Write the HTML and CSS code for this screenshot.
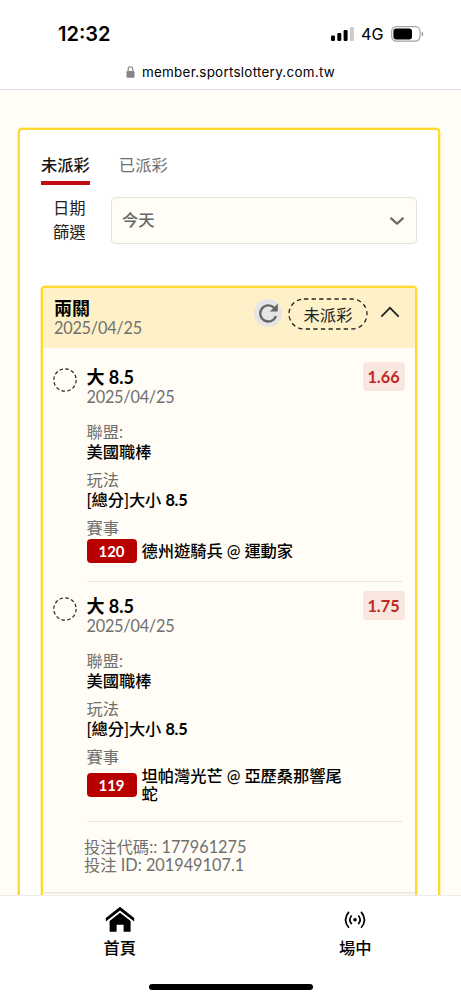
FILE: index.html
```html
<!DOCTYPE html>
<html lang="zh-Hant">
<head>
<meta charset="utf-8">
<meta name="viewport" content="width=device-width, initial-scale=1">
<title>member.sportslottery.com.tw</title>
<link rel="stylesheet" href="styles.css">
</head>
<body>
<div class="phone">
  <header class="browser">
    <div class="status">
      <span class="clock">12:32</span>
      <div class="indicators">
        <svg class="signal" width="24" height="16" viewBox="0 0 24 16">
          <rect x="0" y="9.5" width="4" height="5.5" rx="1.2"/>
          <rect x="6.3" y="7" width="4" height="8" rx="1.2"/>
          <rect x="12.6" y="4" width="4" height="11" rx="1.2"/>
          <rect x="18.9" y="1" width="4" height="14" rx="1.2" fill="#ccc"/>
        </svg>
        <span class="network">4G</span>
        <svg class="battery" width="33" height="16" viewBox="0 0 33 16">
          <rect x=".7" y=".7" width="28.3" height="14.4" rx="4.6" fill="none" stroke="#a3a3a3" stroke-width="1.2"/>
          <rect x="2.4" y="2.5" width="18.6" height="10.9" rx="3"/>
          <path d="M30.7 5.5v5q1.7-.8 1.7-2.5t-1.7-2.5z" fill="#999"/>
        </svg>
      </div>
    </div>
    <div class="address">
      <svg width="9" height="12" viewBox="0 0 9 12">
        <rect x=".5" y="5" width="8" height="6.7" rx="1.2" fill="#858589"/>
        <path d="M2.1 5.5V3.4a2.4 2.6 0 0 1 4.8 0v2.1" fill="none" stroke="#858589" stroke-width="1.1"/>
      </svg>
      <span>member.sportslottery.com.tw</span>
    </div>
  </header>

  <main class="page">
    <section class="panel">
      <nav class="tabs">
        <span class="tab active">未派彩</span>
        <span class="tab">已派彩</span>
      </nav>
      <div class="filter">
        <span class="filter-label">日期<br>篩選</span>
        <div class="select">
          <span>今天</span>
          <svg width="14" height="9" viewBox="0 0 14 9"><path d="M1.2 1.4 7 6.8l5.8-5.4" fill="none" stroke="#666" stroke-width="2.2" stroke-linecap="round" stroke-linejoin="round"/></svg>
        </div>
      </div>

      <article class="ticket">
        <header class="ticket-head">
          <div class="ticket-title">
            <h2>兩關</h2>
            <span class="date">2025/04/25</span>
          </div>
          <span class="refresh">
            <svg width="20" height="20" viewBox="0 0 20 20"><path d="M18 13.2A8.1 8.1 0 1 1 16 4.6" fill="none" stroke="#666" stroke-width="2.4"/><path d="M19.8.6v8h-8z" fill="#666"/></svg>
          </span>
          <span class="badge">
            <svg class="outline" width="80" height="32" viewBox="0 0 80 32"><rect x="1" y="1" width="78" height="30" rx="15" fill="none" stroke="#222" stroke-width="1.3" stroke-dasharray="4.3 3.3"/></svg>
            <span>未派彩</span>
          </span>
          <svg class="collapse" width="20" height="12" viewBox="0 0 20 12"><path d="M1.3 10.6 10 1.8l8.7 8.8" fill="none" stroke="#222" stroke-width="1.7"/></svg>
        </header>

        <section class="leg">
          <svg class="pending" width="24" height="24" viewBox="0 0 24 24"><circle cx="12" cy="12" r="11.2" fill="none" stroke="#222" stroke-width="1.2" stroke-dasharray="3.5 2.36"/></svg>
          <div class="leg-body">
            <div class="leg-top">
              <div><h3>大 8.5</h3><span class="date">2025/04/25</span></div>
              <span class="odds">1.66</span>
            </div>
            <dl>
              <dt>聯盟:</dt><dd>美國職棒</dd>
              <dt>玩法</dt><dd>[總分]大小 <b>8.5</b></dd>
              <dt>賽事</dt><dd class="match"><span class="number">120</span><span>德州遊騎兵 @ 運動家</span></dd>
            </dl>
          </div>
        </section>

        <section class="leg second">
          <svg class="pending" width="24" height="24" viewBox="0 0 24 24"><circle cx="12" cy="12" r="11.2" fill="none" stroke="#222" stroke-width="1.2" stroke-dasharray="3.5 2.36"/></svg>
          <div class="leg-body">
            <div class="leg-top">
              <div><h3>大 8.5</h3><span class="date">2025/04/25</span></div>
              <span class="odds">1.75</span>
            </div>
            <dl>
              <dt>聯盟:</dt><dd>美國職棒</dd>
              <dt>玩法</dt><dd>[總分]大小 <b>8.5</b></dd>
              <dt>賽事</dt><dd class="match"><span class="number">119</span><span>坦帕灣光芒 @ 亞歷桑那響尾蛇</span></dd>
            </dl>
          </div>
        </section>

        <footer class="codes">
          <div>投注代碼:: 177961275</div>
          <div>投注 ID: 201949107.1</div>
        </footer>
      </article>
    </section>
  </main>

  <footer class="bottom">
    <nav class="links">
      <span class="link">
        <svg width="30" height="27" viewBox="0 0 30 27"><path d="M15 .7 29.2 12v3.6L15 4.5.8 15.6V12z"/><path d="M15 6.7 25.6 15v10.8h-7v-7h-7v7h-7V15z"/></svg>
        <span>首頁</span>
      </span>
      <span class="link">
        <svg width="30" height="27" viewBox="0 0 30 27"><circle cx="15" cy="13.8" r="1.8"/><g fill="none" stroke="#000" stroke-width="1.7"><path d="M11.7 9.5q-3.8 4.3 0 8.6M18.3 9.5q3.8 4.3 0 8.6"/><path d="M8.9 5.9q-6.7 7.9 0 15.8M21.1 5.9q6.7 7.9 0 15.8"/></g></svg>
        <span>場中</span>
      </span>
    </nav>
    <div class="home-bar"></div>
  </footer>
</div>
</body>
</html>
```

FILE: styles.css
```css
* { box-sizing: border-box; }
body { margin: 0; font-family: Lato, "Noto Sans CJK TC", sans-serif; font-size: 16.3px; color: #000; }
h2, h3, dl, dt, dd { margin: 0; }
svg { display: block; flex: none; }

.phone { display: flex; flex-direction: column; width: 461px; height: 1000px; overflow: hidden; background: #fff; }

.browser { flex: none; height: 90px; border-bottom: 1px solid #dcdcdc; font-family: Inter, "Liberation Sans", sans-serif; }
.status { display: flex; justify-content: space-between; align-items: center; height: 54px; padding: 14px 37px 0 58px; }
.clock { font-size: 20px; font-weight: 600; }
.indicators { display: flex; align-items: center; }
.network { width: 30px; font-size: 16.2px; font-weight: 400; margin-left: 6px; }
.address { display: flex; justify-content: center; align-items: center; gap: 7px; height: 36px; font-size: 13.4px; letter-spacing: .28px; }

.page { flex: 1; min-height: 0; overflow: hidden; padding: 38px 21px 0 18px; background: #fffdf5; }
.panel { height: 900px; padding: 22px 21px 0 21px; border: 2px solid #ffd92f; border-radius: 4px; box-shadow: 0 0 0 .5px #ffe36b; background: #fff; }

.tabs { display: flex; gap: 29px; height: 33px; }
.tab { height: 33px; line-height: 25px; color: #707070; }
.tab.active { color: #111; font-weight: 500; border-bottom: 4px solid #c00d14; }

.filter { display: flex; height: 47px; margin-top: 12px; }
.filter-label { width: 70px; padding-left: 12px; margin-top: -1px; line-height: 23.5px; color: #222; }
.select { flex: 1; display: flex; align-items: center; justify-content: space-between; padding: 0 12px 0 10px; border: 1px solid #e6e2dc; border-radius: 4px; background: #fffdf5; color: #666; font-weight: 500; }
.select span { padding-bottom: 3px; }
.select svg { margin-top: 2px; }

.ticket { height: 800px; margin-top: 42px; border: 2px solid #ffd92f; border-radius: 4px; box-shadow: 0 0 0 .5px #ffe36b; background: #fffdf5; }
.ticket-head { display: flex; height: 60px; padding: 10px 15px 0 11px; background: #fff1c7; }
.ticket-title { flex: 1; line-height: 20px; }
.ticket-title h2 { font-size: 18px; line-height: 20px; font-weight: 700; }
.date { display: block; font-size: 16.3px; line-height: 19px; color: #707070; letter-spacing: -.24px; }
.refresh { display: flex; align-items: center; justify-content: center; width: 28px; height: 28px; margin-top: 1px; border-radius: 50%; background: #e5e5e5; }
.badge { display: grid; place-items: center; width: 80px; height: 32px; margin: 0 12px 0 6px; color: #222; }
.badge > * { grid-area: 1 / 1; }
.collapse { margin-top: 8px; }

.leg { display: flex; gap: 9.5px; height: 234px; padding: 16px 13px 0 10px; }
.leg .pending { margin-top: 4px; }
.leg-body { flex: 1; border-bottom: 1px solid #e8e4df; }
.leg-top { display: flex; justify-content: space-between; height: 58px; margin-right: -2.5px; }
.leg-top h3 { padding-top: 1px; font-size: 18px; line-height: 24px; font-weight: 700; }
.leg-top .date { line-height: 16px; }
.odds { width: 42px; height: 29px; margin-top: -2px; line-height: 30px; text-align: center; font-weight: 700; color: #be2a23; background: #f8e6df; border-radius: 4px; }
dt { line-height: 20px; color: #707070; }
dd { line-height: 20px; font-weight: 500; margin-bottom: 8px; letter-spacing: -.05px; }
dd b { font-weight: 700; letter-spacing: -.3px; }
.match { display: flex; align-items: center; gap: 5px; width: 270px; min-height: 25px; line-height: 18px; }
.number { flex: none; width: 50px; height: 24px; line-height: 25px; text-align: center; font-size: 15px; font-weight: 700; color: #fff; background: #b90000; border-radius: 4px; }
.second { height: 240px; padding-top: 11px; }
.second .match { min-height: 36px; }

.codes { height: 72px; padding: 16px 0 0 41px; line-height: 18px; color: #707070; border-bottom: 2px solid #efeee6; }

.bottom { flex: none; height: 105px; border-top: 1px solid #ececec; background: #fff; }
.links { display: flex; height: 87px; padding: 10px 0 0 2px; }
.link { flex: none; width: 235.5px; display: flex; flex-direction: column; align-items: center; gap: 2px; line-height: 25px; font-weight: 500; }
.home-bar { width: 164px; height: 6px; margin: 1px auto 0; border-radius: 3px; background: #000; }
```
